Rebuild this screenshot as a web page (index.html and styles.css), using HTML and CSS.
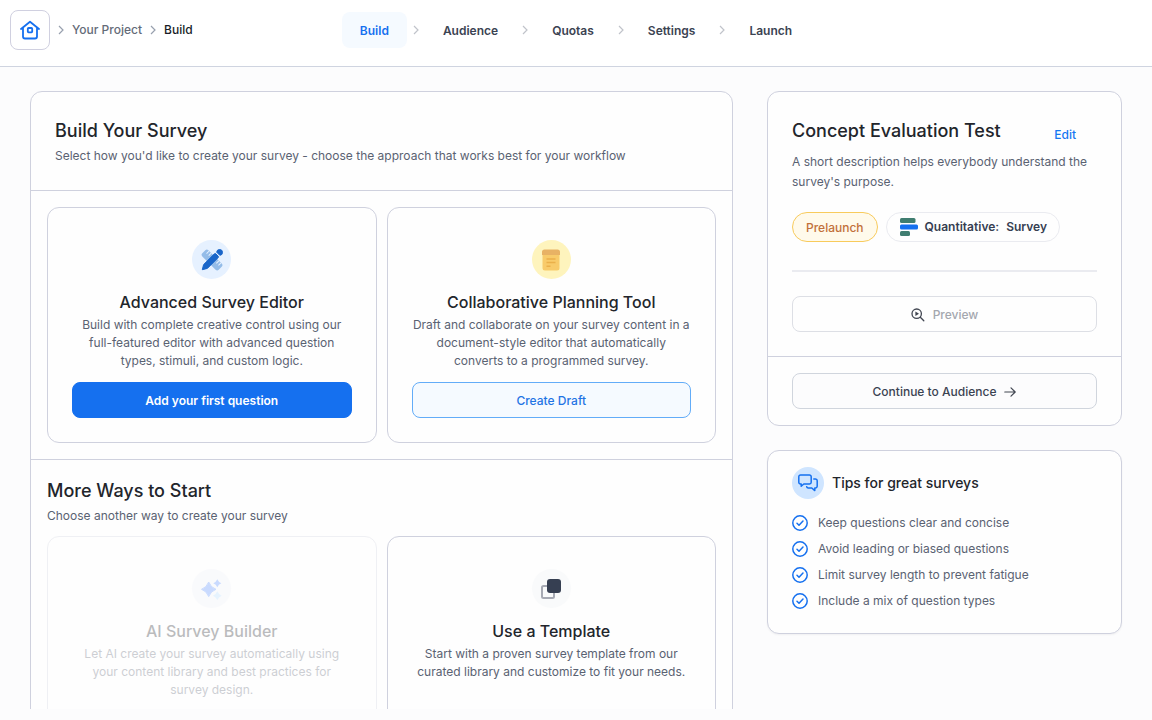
FILE: index.html
```html
<!DOCTYPE html>
<html lang="en">
<head>
<meta charset="utf-8">
<meta name="viewport" content="width=device-width, initial-scale=1">
<title>Build Your Survey</title>
<link rel="stylesheet" href="styles.css">
</head>
<body>
<header class="topbar">
  <nav class="crumbs" aria-label="Breadcrumb">
    <a class="home" href="#" aria-label="Home">
      <svg width="20" height="20" viewBox="0 0 20 20" fill="none" stroke="#1570ef" stroke-width="1.800" stroke-linecap="round" stroke-linejoin="round"><path d="M1 9 10 1.800 19 9M3 8v8.500a2 2 0 0 0 2 2h10a2 2 0 0 0 2-2V8"/><rect x="7.800" y="8" width="4.400" height="4.400" rx=".8"/></svg>
    </a>
    <svg class="sep" width="6" height="10" viewBox="0 0 6 10"><path d="m1 1 4 4-4 4"/></svg>
    <a class="crumb" href="#">Your Project</a>
    <svg class="sep" width="6" height="10" viewBox="0 0 6 10"><path d="m1 1 4 4-4 4"/></svg>
    <span class="crumb current">Build</span>
  </nav>
  <nav class="steps" aria-label="Survey steps">
    <a class="step active" href="#">Build</a>
    <svg class="sep light" width="6" height="10" viewBox="0 0 6 10"><path d="m1 1 4 4-4 4"/></svg>
    <a class="step" href="#">Audience</a>
    <svg class="sep light" width="6" height="10" viewBox="0 0 6 10"><path d="m1 1 4 4-4 4"/></svg>
    <a class="step" href="#">Quotas</a>
    <svg class="sep light" width="6" height="10" viewBox="0 0 6 10"><path d="m1 1 4 4-4 4"/></svg>
    <a class="step" href="#">Settings</a>
    <svg class="sep light" width="6" height="10" viewBox="0 0 6 10"><path d="m1 1 4 4-4 4"/></svg>
    <a class="step" href="#">Launch</a>
  </nav>
</header>

<main class="content">
  <section class="panel">
    <div class="panel-head">
      <h1 class="title">Build Your Survey</h1>
      <p class="text">Select how you'd like to create your survey - choose the approach that works best for your workflow</p>
    </div>
    <div class="group">
      <div class="options">
        <article class="option">
          <span class="disc blue">
            <svg width="22" height="22" viewBox="0 0 22 22"><g transform="rotate(45 11 11)"><rect x="-.6" y="6.700" width="23.200" height="8.600" rx="2.200" fill="#94bce8"/><path d="M2.600 6.700v3.600M5.600 6.700v3.600M16.400 6.700v3.600M19.400 6.700v3.600" stroke="#e6f1ff" stroke-width="1"/></g><path d="M1.300 20.700 2.600 15.600 13.400 4.800a1 1 0 0 1 1.400 0l2.400 2.400a1 1 0 0 1 0 1.400L6.400 19.400ZM15.700 3.200a2.900 2.900 0 1 1 3.100 3.100Z" fill="#1a66c9" stroke="#1a66c9" stroke-linejoin="round"/></svg>
          </span>
          <h2 class="option-title">Advanced Survey Editor</h2>
          <p class="text">Build with complete creative control using our full-featured editor with advanced question types, stimuli, and custom logic.</p>
          <button class="btn primary" type="button">Add your first question</button>
        </article>
        <article class="option">
          <span class="disc yellow">
            <svg width="20" height="22" viewBox="0 0 20 22"><rect x="1.500" y="1" width="17" height="20.500" rx="2.500" fill="#f8cb6a"/><path d="M1 6V3a2.500 2.500 0 0 1 2.500-2.500h13A2.500 2.500 0 0 1 19 3v3Z" fill="#e8b264"/><path d="M5.500 10h9M5.500 13.500h9M5.500 17.200h4" stroke="#eab04a" stroke-width="1.400"/></svg>
          </span>
          <h2 class="option-title">Collaborative Planning Tool</h2>
          <p class="text">Draft and collaborate on your survey content in a document-style editor that automatically converts to a programmed survey.</p>
          <button class="btn soft" type="button">Create Draft</button>
        </article>
      </div>
    </div>
    <div class="group">
      <h2 class="title">More Ways to Start</h2>
      <p class="text intro">Choose another way to create your survey</p>
      <div class="options">
        <article class="option disabled">
          <span class="disc gray">
            <svg width="22" height="22" viewBox="0 0 22 22"><path d="M7.700 4Q9.700 9.500 15 11.300 9.700 13.100 7.700 18.600 5.700 13.100.5 11.300 5.700 9.500 7.700 4Z" fill="#528bff" stroke="#528bff" stroke-linejoin="round"/><path d="M16.300 1.300q1.200 2.800 4 4-2.800 1.200-4 4-1.200-2.800-4-4 2.800-1.200 4-4Z" fill="#528bff"/><path d="M16.300 13.300q1.300 3.100 4.400 4.400-3.100 1.300-4.400 4.400-1.300-3.100-4.400-4.400 3.100-1.300 4.400-4.400Z" fill="#b2ddff"/></svg>
          </span>
          <h3 class="option-title">AI Survey Builder</h3>
          <p class="text">Let AI create your survey automatically using your content library and best practices for survey design.</p>
        </article>
        <article class="option">
          <span class="disc gray">
            <svg width="22" height="22" viewBox="0 0 22 22"><rect x="2" y="8" width="12" height="12" rx="1.500" fill="none" stroke="#a6a9b3" stroke-width="2"/><rect x="7" y="1" width="14" height="14" rx="3" fill="#363f52"/></svg>
          </span>
          <h3 class="option-title">Use a Template</h3>
          <p class="text">Start with a proven survey template from our curated library and customize to fit your needs.</p>
        </article>
      </div>
    </div>
  </section>

  <aside class="side">
    <section class="panel">
      <div class="summary">
        <div class="summary-head">
          <h2 class="title">Concept Evaluation Test</h2>
          <button class="edit" type="button">Edit</button>
        </div>
        <p class="text">A short description helps everybody understand the survey's purpose.</p>
        <div class="tags">
          <span class="tag prelaunch">Prelaunch</span>
          <span class="tag type">
            <svg width="18" height="18" viewBox="0 0 18 18"><rect width="15.500" height="5" rx="1.500" fill="#3f7d70"/><rect y="6.500" width="18" height="5" rx="1.500" fill="#1570ef"/><rect y="13" width="10" height="5" rx="1.500" fill="#3f7d70"/></svg>
            <span>Quantitative:</span><span>Survey</span>
          </span>
        </div>
        <hr class="rule">
        <button class="btn preview" type="button" disabled>
          <svg width="14" height="14" viewBox="0 0 14 14" fill="none" stroke="#414651" stroke-width="1.300" stroke-linecap="round"><circle cx="5.700" cy="5.700" r="4.700"/><path d="m9.300 9.300 3.500 3.500"/><path d="M4.400 3.500v4.400L8 5.700Z" fill="#414651" stroke="none"/></svg>
          Preview
        </button>
      </div>
      <div class="group-foot">
        <button class="btn plain" type="button">
          Continue to Audience
          <svg width="12" height="12" viewBox="0 0 12 12" fill="none" stroke="#414651" stroke-width="1.200" stroke-linecap="round" stroke-linejoin="round"><path d="M.8 6h10.400M7 1.800 11.200 6 7 10.200"/></svg>
        </button>
      </div>
    </section>

    <section class="panel tips">
      <div class="tips-head">
        <span class="tips-icon">
          <svg width="20" height="18" viewBox="0 0 20 18" fill="none" stroke="#1570ef" stroke-width="1.500" stroke-linejoin="round" stroke-linecap="round"><path d="M2.500 1h9A1.700 1.700 0 0 1 13.200 2.700v5.600A1.700 1.700 0 0 1 11.500 10H5.800L3.200 12.300V10H2.500A1.700 1.700 0 0 1 .8 8.300V2.700A1.700 1.700 0 0 1 2.500 1ZM15.800 5h1.500A1.900 1.900 0 0 1 19.200 6.900v5.200A1.900 1.900 0 0 1 17.300 14h-.5v2.600L13.800 14h-3.600A1.600 1.600 0 0 1 8.700 12.800"/></svg>
        </span>
        <h2 class="tips-title">Tips for great surveys</h2>
      </div>
      <ul class="tips-list">
        <li class="tip"><svg class="tick" width="16" height="16" viewBox="0 0 16 16"><circle cx="8" cy="8" r="7.200"/><path d="m5 8.300 2 1.900 4-4.100"/></svg>Keep questions clear and concise</li>
        <li class="tip"><svg class="tick" width="16" height="16" viewBox="0 0 16 16"><circle cx="8" cy="8" r="7.200"/><path d="m5 8.300 2 1.900 4-4.100"/></svg>Avoid leading or biased questions</li>
        <li class="tip"><svg class="tick" width="16" height="16" viewBox="0 0 16 16"><circle cx="8" cy="8" r="7.200"/><path d="m5 8.300 2 1.900 4-4.100"/></svg>Limit survey length to prevent fatigue</li>
        <li class="tip"><svg class="tick" width="16" height="16" viewBox="0 0 16 16"><circle cx="8" cy="8" r="7.200"/><path d="m5 8.300 2 1.900 4-4.100"/></svg>Include a mix of question types</li>
      </ul>
    </section>
  </aside>
</main>
</body>
</html>
```
FILE: styles.css
```css
* { box-sizing: border-box; margin: 0; }

body {
  display: flex;
  flex-direction: column;
  height: 100vh;
  padding-bottom: 11px;
  background: #fcfcfd;
  color: #22252b;
  font: 400 12px/20px Inter, "Liberation Sans", sans-serif;
}

svg { display: block; flex: none; }
a { color: inherit; text-decoration: none; }
button { font: inherit; cursor: pointer; }

.topbar {
  display: grid;
  grid-template-columns: 1fr auto 1fr;
  align-items: start;
  padding: 10px 10px 16px;
  border-bottom: 1px solid #cfd4e0;
  background: #fff;
}

.crumbs { display: flex; align-items: center; gap: 8px; }
.home {
  display: grid;
  place-items: center;
  width: 40px;
  height: 40px;
  border: 1px solid #d0d0e0;
  border-radius: 8px;
}
.crumb { color: #646b78; font-weight: 500; }
.current { color: #181d27; }
.sep { fill: none; stroke: #98a0ae; stroke-width: 1.2; }
.light { stroke: #c0c3ca; }

.steps { display: flex; align-items: center; gap: 6px; padding-top: 2px; }
.step {
  padding: 9px 18px 7px;
  border-radius: 8px;
  color: #3b4352;
  font-weight: 600;
}
.active { background: #f5faff; color: #1570ef; }

.content {
  display: grid;
  grid-template-columns: minmax(0, 1fr) 355px;
  align-items: start;
  gap: 34px;
  flex: 1;
  min-height: 0;
  padding: 24px 30px 0;
  overflow: hidden;
}

.panel {
  border: 1px solid #cfd1de;
  border-radius: 12px;
  background: #fefefe;
}
.panel-head { padding: 24px; }
.title { font-size: 18px; font-weight: 500; line-height: 30px; }
.text { color: #5a6272; }
.group { padding: 16px; border-top: 1px solid #cfd1de; }
.intro { margin-bottom: 10px; }

.options { display: grid; grid-template-columns: 1fr 1fr; gap: 10px; }
.option {
  display: flex;
  flex-direction: column;
  align-items: center;
  padding: 32px 24px 24px;
  border: 1px solid #cfd1de;
  border-radius: 12px;
  text-align: center;
}
.option .text { line-height: 18px; }
.option-title {
  margin: 11px 0 2px;
  font-size: 16px;
  font-weight: 500;
  line-height: 24px;
}
.disabled { opacity: 0.3; }

.disc {
  display: grid;
  place-items: center;
  width: 39px;
  height: 39px;
  border-radius: 50%;
}
.blue { background: #e6f1ff; }
.yellow { background: #fef4bd; }
.gray { background: #f9fafb; }
.disabled .gray { background: #f0f2fa; }

.btn {
  display: flex;
  align-items: center;
  justify-content: center;
  gap: 8px;
  width: 100%;
  height: 36px;
  padding: 2px 6px 0;
  border: 1px solid #d0d5dd;
  border-radius: 8px;
  background: #fcfcfd;
  color: #3b4352;
  font-weight: 500;
}
.option .btn { margin-top: 12px; }
.primary { border-color: #1570ef; background: #1570ef; color: #fff; font-weight: 600; }
.soft { border-color: #62acf8; background: #f5faff; color: #1f74e4; }
.preview { border-color: #dddfe5; background: #fefefe; color: #a4a7ae; }

.side { display: grid; gap: 24px; }
.summary { padding: 24px; }
.summary-head { display: flex; justify-content: space-between; }
.edit {
  height: 36px;
  padding: 2px 21px 0;
  border: 0;
  background: none;
  color: #1677f2;
  font-weight: 500;
}
.tags { display: flex; gap: 8px; margin-top: 20px; }
.tag {
  display: flex;
  align-items: center;
  gap: 7px;
  height: 30px;
  padding: 0 12px 0 13px;
  border: 1px solid #eaebf0;
  border-radius: 15px;
  color: #363f52;
  font-weight: 600;
}
.prelaunch { padding: 2px 13px 0; border-color: #f8cb5c; background: #fffaeb; color: #c2703a; font-weight: 500; }
.rule { height: 2px; margin: 28px 0 24px; border: 0; background: #eaebf0; }
.group-foot { padding: 16px 24px; border-top: 1px solid #cfd1de; }

.tips { padding: 16px 24px 24px; box-shadow: 0 1px 2px #1018280d; }
.tips-head { display: flex; align-items: center; gap: 8px; }
.tips-icon {
  display: grid;
  place-items: center;
  width: 32px;
  height: 32px;
  border-radius: 50%;
  background: #cfe5ff;
}
.tips-title { font-size: 14px; font-weight: 500; }
.tips-list { display: grid; gap: 10px; margin-top: 16px; padding: 0; list-style: none; }
.tip { display: flex; align-items: center; gap: 10px; color: #5a6272; line-height: 16px; }
.tick { fill: none; stroke: #1570ef; stroke-width: 1.5; stroke-linecap: round; stroke-linejoin: round; }
```
